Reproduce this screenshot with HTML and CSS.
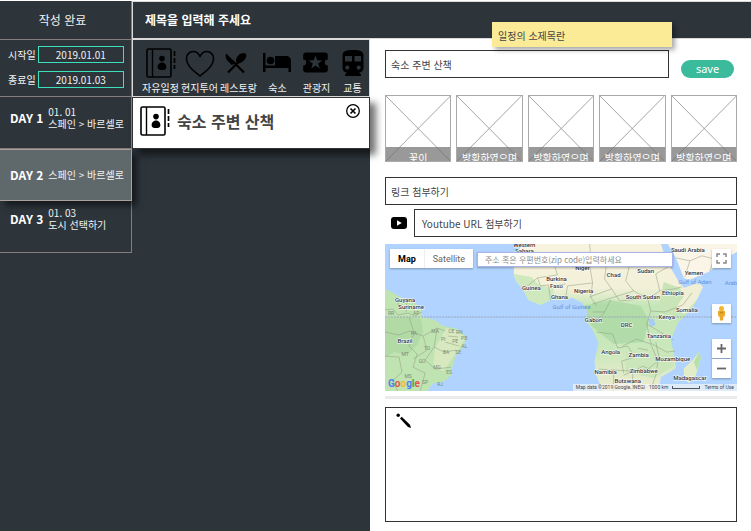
FILE: index.html
```html
<!DOCTYPE html>
<html lang="ko">
<head>
<meta charset="utf-8">
<meta name="viewport" content="width=device-width, initial-scale=1">
<title>여행 일정 작성</title>
<link rel="stylesheet" href="styles.css">
</head>
<body>
<svg class="defs" aria-hidden="true">
  <symbol id="book" viewBox="0 0 30 30">
    <rect x="1" y="1" width="24" height="28" rx="1.5" fill="none" stroke="#000" stroke-width="1.6"/>
    <path d="M6.5 1v28" stroke="#000" stroke-width="1.4"/>
    <circle cx="16" cy="10.6" r="2.8"/>
    <path d="M16 14.4c3 0 4.400 2.400 4.400 4.800 0 2-1.800 2.900-4.400 2.900s-4.400-.9-4.400-2.900c0-2.400 1.400-4.800 4.400-4.800z"/>
    <path d="M28.500 3v5M28.500 10v5M28.500 17v4" stroke="#000" stroke-width="1.700"/>
  </symbol>
  <symbol id="cross" viewBox="0 0 66 66" preserveAspectRatio="none">
    <path d="M0 0L66 66M66 0L0 66" stroke="#8c8c8c" stroke-width="0.8"/>
  </symbol>
</svg>
<div class="app">
  <aside class="sidebar">
    <button class="done" type="button">작성 완료</button>
    <div class="dates">
      <label class="date">시작일 <input type="text" value="2019.01.01"></label>
      <label class="date">종료일 <input type="text" value="2019.01.03"></label>
    </div>
    <nav class="days">
      <button class="day" type="button"><b>DAY 1</b><span>01. 01<br>스페인 &gt; 바르셀로</span></button>
      <button class="day active" type="button"><b>DAY 2</b><span>스페인 &gt; 바르셀로</span></button>
      <button class="day" type="button"><b>DAY 3</b><span>01. 03<br>도시 선택하기</span></button>
    </nav>
  </aside>

  <header class="header"><h1>제목을 입력해 주세요</h1></header>

  <section class="plan">
    <div class="tools">
      <button class="tool" type="button"><svg width="30" height="30"><use href="#book"/></svg>자유일정</button>
      <button class="tool" type="button"><svg width="30" height="30" viewBox="0 0 30 30"><path d="M15 28C11 25 2 19 1.500 11.500 1.200 6.500 4.500 3.500 8 3.500c3.200 0 5.600 2 7 4.800 1.400-2.800 3.800-4.800 7-4.800 3.500 0 6.800 3 6.500 8C28 19 19 25 15 28z" fill="none" stroke="#000" stroke-width="1.600"/></svg>현지투어</button>
      <button class="tool" type="button"><svg width="30" height="30" viewBox="0 0 30 30"><path d="M4 24.500L15 13.500M20 24.500L8 12.500" stroke="#000" stroke-width="2.200"/><path d="M2.200 5.500L11 14.300l-3 3-4-4C1.700 11 1 8 2.200 5.500z"/><path d="M13.500 15.500c-2.500-2-1.500-5.500.5-7.800 2.200-2.500 6-3.600 7.600-2.100s.6 5-1.900 7.200c-2.100 2-4.600 3-6.200 2.700z"/></svg>레스토랑</button>
      <button class="tool" type="button"><svg width="30" height="30" viewBox="0 0 30 30"><path d="M0 5h2.500v12.500H12V8h11c3 0 5 2 5 5v11h-2.500v-4h-23v4H0z"/><circle cx="7.500" cy="12.500" r="3.800"/></svg>숙소</button>
      <button class="tool" type="button"><svg width="30" height="30" viewBox="0 0 30 30"><path fill-rule="evenodd" d="M5 4.500h18c1.700 0 2.800 1 2.800 2.500v4.500a3 3 0 0 0 0 6V22c0 1.500-1.100 2.500-2.800 2.500H4c-1.700 0-2.800-1-2.800-2.500v-4.500a3 3 0 0 0 0-6V7c0-1.500 1.100-2.500 2.800-2.500zM13.500 7.500l-1.700 4.800-5.100.1 4.100 3.100-1.500 4.900 4.200-2.900 4.200 2.900-1.500-4.900 4.100-3.100-5.100-.1z"/></svg>관광지</button>
      <button class="tool" type="button"><svg width="30" height="30" viewBox="0 0 30 30"><path fill-rule="evenodd" d="M15 2c6.500 0 10.500 1 10.500 5.500V20c0 2.600-2 4.500-4.500 4.500l2 2V28H7v-1.500l2-2c-2.500 0-4.500-1.900-4.500-4.500V7.500C4.500 3 8.500 2 15 2zM7 8v5.500h7V8zM16.500 8v5.500H23V8zM9.300 17.500a2.100 2.100 0 1 0 0 4.200 2.100 2.100 0 0 0 0-4.200zM20.700 17.500a2.100 2.100 0 1 0 0 4.200 2.100 2.100 0 0 0 0-4.200z"/></svg>교통</button>
    </div>
    <article class="card">
      <svg width="30" height="30" aria-hidden="true"><use href="#book"/></svg>
      <h2>숙소 주변 산책</h2>
      <button class="close" type="button" aria-label="닫기"><svg width="16" height="16" viewBox="0 0 16 16"><circle cx="8" cy="8" r="6.300" fill="none" stroke="#000" stroke-width="1.300"/><path d="M5.500 5.500l5 5M10.500 5.500l-5 5" stroke="#000" stroke-width="1.600"/></svg></button>
    </article>
  </section>

  <main class="editor">
    <div class="hint">일정의 소제목란</div>
    <div class="title-row">
      <input class="field" type="text" aria-label="일정의 소제목란" value="숙소 주변 산책">
      <button class="save" type="button">save</button>
    </div>
    <div class="photos">
      <figure><svg><use href="#cross"/></svg><figcaption>꽃이</figcaption></figure>
      <figure><svg><use href="#cross"/></svg><figcaption>방황하였으며</figcaption></figure>
      <figure><svg><use href="#cross"/></svg><figcaption>방황하였으며</figcaption></figure>
      <figure><svg><use href="#cross"/></svg><figcaption>방황하였으며</figcaption></figure>
      <figure><svg><use href="#cross"/></svg><figcaption>방황하였으며</figcaption></figure>
    </div>
    <input class="field" type="text" aria-label="링크" placeholder="링크 첨부하기">
    <div class="video-row">
      <svg width="16" height="12" viewBox="0 0 16 12" aria-hidden="true"><rect width="16" height="12" rx="3"/><path d="M6 3.300v5.400L10.800 6z" fill="#fff"/></svg>
      <input class="field" type="text" aria-label="Youtube URL" placeholder="Youtube URL 첨부하기">
    </div>
    <div class="map">
      <svg class="world" viewBox="0 0 351 147" preserveAspectRatio="xMidYMid slice">
        <defs>
          <linearGradient id="africa" x1="0" y1="0" x2="0" y2="1">
            <stop offset="0" stop-color="#f7f3df"/><stop offset=".3" stop-color="#f3f0d8"/><stop offset=".42" stop-color="#c5e6b8"/><stop offset=".72" stop-color="#c9e8bb"/><stop offset="1" stop-color="#efecd0"/>
          </linearGradient>
          <clipPath id="africa-shape"><path d="M138 0L132 8 130 14 128 29 130 36 138 46 143 56 155 61 165 56 175 56 187 54 197 59 202 68 200 76 207 86 213 99 209 116 210 129 217 147H273L275 133 290 124 288 109 285 96 292 79 307 64 317 43 313 39 298 44 292 36 283 21 277 6 275 0z"/></clipPath>
        </defs>
        <rect width="351" height="147" fill="#b0d3ff"/>
        <path d="M0 45L7 48 15 53 28 58 36 64 37 73 50 76 58 82 73 85 81 93 78 103 71 111 67 123 66 131 58 138 48 139 42 147H0z" fill="#c0e4b1"/>
        <path d="M0 74L20 73 36 75 38 88 32 101 22 111 9 108 0 114z" fill="#b2daa5"/>
        <path d="M61 84L74 87 80 94 74 104 66 116 58 127 48 122 50 104z" fill="#d8e9bf"/>
        <g clip-path="url(#africa-shape)">
          <rect x="128" width="190" height="147" fill="url(#africa)"/>
          <path d="M128 30l18 3 8 8 14 3v18h-40z" fill="#cfe8bd"/>
          <path d="M197 62l28-6 30 6 8 14-5 22-30 2-22-18z" fill="#a9d8a3" opacity=".75"/>
          <path d="M278 38l16 6 6 12-14 18-14-8z" fill="#c9e4b6"/>
          <path d="M294 40l24-2-2 12-18 20-8-6 8-12z" fill="#f0efd6"/>
          <path d="M262 75l6 0 2 6-5 2z" fill="#a8cdf5"/>
          <path d="M240 108l30-6 18 8v12l-20 12-28-6z" fill="#cbe6ba"/>
        </g>
        <path d="M282 0L290 14 298 34 303 36 323 28 337 16 351 8V0z" fill="#faf5e6"/>
        <path d="M313 108L315 114 310 131 303 139 298 134 298 124 307 116z" fill="#e3ecc8"/>
        <path d="M313 108L315 114 311 126 308 118z" fill="#b7dfa9"/>
        <g class="borders">
          <path d="M0 66l8-1 5 6 10-2 7 3 7-4M12 53l2 13M22 56l-1 12M0 88l14 3 10-4 14 5 14-8 8 3M24 73l5 16-5 13 8 8-4 13 12 6-5 18M38 92l4 14-14 9M52 84l-3 19 10 5 12-2M49 103l-9 13 10 9 16-2M0 112l14 1 3 15-10 9 6 10M63 92l10 1M60 98l14 4"/>
          <path d="M130 14h13l10 6 15-1 4 12-20 3-11 9M152 34l3 8 8-1 2 15M143 47l9-4M168 18l20-6 16 9 3 18-25 3-2 13M180 40l-10 2M204 0l2 20 18-10 20 11 20-2 18 3M222 10l-3 25 7 10-22 8M207 39l-2 14 6 9M244 21l-4 16 8 10-22 7-19 6M248 47l14 8 12-8-4-17 14-8M262 55l3 12 14 1 18-7 9-12M274 47l14-2 8-2M226 45l8 12 22-2M207 68l12 0 6-12M202 77l8 1 9-10M211 88l16 2 5 14 10-2 7 11-13 4 2 12M265 67l-4 13 4 19 16 9 8-1M261 80l27 16M237 102l14-7 14 5 7 17-10 8-14 2-10 4M213 125l34 2v20M247 128l10-6 14 6-4 12-12 7M228 125v22M252 104l10 2M270 98l3 14-2 12"/>
          <path d="M290 14l14 3 12-5 12 3M304 17l-5 16M328 15l-4 12"/>
        </g>
        <path d="M0 73H351" stroke="#9aa6bd" stroke-width="1" stroke-dasharray="2 1"/>
        <g class="labels">
          <text x="20" y="58">Guyana</text><text x="26" y="65">Suriname</text><text x="20" y="99">Brazil</text>
          <text x="139" y="3">Western</text><text x="139" y="9">Sahara</text><text x="146" y="46">Guinea</text><text x="171" y="37">Burkina</text><text x="171" y="44">Faso</text><text x="174" y="55">Ghana</text>
          <text x="197" y="26">Niger</text><text x="228" y="33">Chad</text><text x="260" y="29">Sudan</text><text x="198" y="49">Nigeria</text><text x="257" y="55">South Sudan</text><text x="287" y="51">Ethiopia</text><text x="301" y="68">Somalia</text><text x="281" y="75">Kenya</text><text x="208" y="78">Gabon</text><text x="241" y="83">DRC</text><text x="273" y="94">Tanzania</text><text x="225" y="110">Angola</text><text x="253" y="113">Zambia</text><text x="287" y="117">Mozambique</text><text x="220" y="130">Namibia</text><text x="258" y="129">Zimbabwe</text><text x="242" y="139">Botswana</text><text x="304" y="136">Madagascar</text><text x="302" y="8">Saudi Arabia</text><text x="308" y="31">Yemen</text>
        </g>
        <g class="labels minor">
          <text x="29" y="91">PA</text><text x="50" y="89">MA</text><text x="66" y="89">CE</text><text x="74" y="90">RN</text><text x="58" y="97">PI</text><text x="70" y="99">PE</text><text x="79" y="96">PB</text><text x="79" y="104">AL</text><text x="73" y="110">SE</text><text x="42" y="106">TO</text><text x="61" y="110">BA</text><text x="20" y="112">MT</text><text x="37" y="119">GO</text><text x="52" y="125">MG</text><text x="64" y="130">ES</text><text x="23" y="134">MS</text><text x="40" y="140">SP</text><text x="55" y="142">RJ</text><text x="6" y="71">RR</text><text x="31" y="71">AP</text>
        </g>
        <g class="labels sea"><text x="309" y="40">Gulf of Aden</text><text x="186" y="65">Gulf of Guinea</text><text x="345" y="41">Arab</text></g>
      </svg>
      <div class="map-type"><button class="on" type="button">Map</button><button type="button">Satellite</button></div>
      <input class="address" type="text" aria-label="주소" placeholder="주소 혹은 우편번호(zip code)입력하세요">
      <div class="map-tools">
        <button class="tile" type="button" aria-label="전체 화면"><svg width="19" height="19" viewBox="0 0 19 19"><path d="M5 8V5h3M11 5h3v3M14 11v3h-3M8 14H5v-3" fill="none" stroke="#888" stroke-width="1.500"/></svg></button>
        <button class="tile pegman" type="button" aria-label="스트리트 뷰"><svg width="19" height="19" viewBox="0 0 19 19"><path d="M5.800 8c0-1 1.600-1.800 3.700-1.800s3.700.8 3.700 1.800l-.5 4.500h-1.300l-.4 4H8l-.4-4H6.300z" fill="#eba92b"/><circle cx="9.500" cy="4.600" r="2.500" fill="#f3b52f"/><path d="M8 8l1.500 1L11 8" stroke="#b77a13" fill="none"/></svg></button>
        <div class="zoom">
          <button class="tile" type="button" aria-label="확대"><svg width="19" height="19" viewBox="0 0 19 19"><path d="M9.500 5v9M5 9.500h9" stroke="#666" stroke-width="1.800"/></svg></button>
          <button class="tile" type="button" aria-label="축소"><svg width="19" height="19" viewBox="0 0 19 19"><path d="M5 9.500h9" stroke="#666" stroke-width="1.800"/></svg></button>
        </div>
      </div>
      <div class="logo"><span class="b">G</span><span class="r">o</span><span class="y">o</span><span class="b">g</span><span class="g">l</span><span class="r">e</span></div>
      <div class="credit"><span>Map data ©2019 Google, INEGI</span><span>1000 km</span><i></i><a href="#">Terms of Use</a></div>
    </div>
    <div class="divider"></div>
    <div class="memo">
      <textarea aria-label="메모"></textarea>
      <svg width="16" height="16" viewBox="0 0 16 16" aria-hidden="true"><circle cx="2.200" cy="2.200" r="1.700"/><path d="M4 5.500L5.700 3.800 14 11.800l1 3.200-3-1z"/></svg>
    </div>
  </main>
</div>
</body>
</html>
```

FILE: styles.css
```css
* { box-sizing: border-box; }

body {
  margin: 0;
  background: #fff;
  color: #444;
  font: 10px/12px "Noto Sans CJK KR", sans-serif;
}

button, input, textarea {
  margin: 0;
  padding: 0;
  border: 0;
  border-radius: 0;
  background: none;
  color: inherit;
  font: inherit;
}

h1, h2, figure { margin: 0; }
svg { display: block; flex: none; }
.defs { position: absolute; width: 0; height: 0; }

.app {
  display: grid;
  grid-template-columns: 132px 238px 1fr;
  grid-template-rows: 38px 1fr;
  min-height: 100vh;
  padding-top: 1px;
}

.sidebar {
  grid-row: 1 / 3;
  background: #2d353b;
  color: #f2f2f2;
}

.done {
  display: block;
  width: 100%;
  height: 39px;
  padding-right: 6px;
  border: solid #857d7b;
  border-width: 0 1px 1px 0;
  font-size: 12px;
  line-height: 16px;
}

.dates {
  display: flex;
  flex-direction: column;
  gap: 8px;
  height: 57px;
  padding: 6px 7px 8px 8px;
  border: solid #857d7b;
  border-width: 0 1px 1px 0;
}

.date {
  display: flex;
  align-items: center;
  gap: 2px;
  white-space: nowrap;
}

.date input {
  flex: 1;
  min-width: 0;
  height: 17px;
  border: 1px solid #3ce0bd;
  text-align: center;
}

.day {
  display: flex;
  align-items: center;
  gap: 5px;
  width: 100%;
  height: 52px;
  padding: 0 0 10px 10px;
  border: solid #857d7b;
  border-width: 0 1px 1px 0;
  text-align: left;
  white-space: nowrap;
}

.day b { font-size: 12px; line-height: 16px; color: #fff; }
.day:last-child { padding-bottom: 16px; }

.day.active {
  position: relative;
  z-index: 1;
  padding-bottom: 0;
  border-color: #aaa19f;
  border-top-width: 1px;
  background: #5f686b;
  box-shadow: 5px 5px 6px rgba(0, 0, 0, .5);
}

.header {
  grid-column: 2 / 4;
  display: flex;
  align-items: center;
  padding-left: 12px;
  border: 1px solid #ddd9d9;
  border-right: 0;
  background: #2d353b;
  color: #fff;
}

.header h1 { font-size: 12px; line-height: 16px; }

.plan { background: #2d353b; }

.tools {
  display: grid;
  grid-template-columns: repeat(5, 39px) 1fr;
  height: 58px;
  padding: 8px 0 0 8px;
  border: 1px solid #ddd9d9;
  color: #f2f2f2;
}

.tool {
  display: flex;
  flex-direction: column;
  align-items: center;
  gap: 4px;
  height: 46px;
  white-space: nowrap;
}

.card {
  position: relative;
  z-index: 2;
  display: flex;
  align-items: center;
  gap: 7px;
  height: 52px;
  padding: 0 8px 4px 7px;
  border: 1px solid #333;
  background: #fff;
  box-shadow: 6px 6px 7px rgba(0, 0, 0, .55);
}

.card h2 { flex: 1; font-size: 16px; line-height: 24px; }
.close { align-self: flex-start; padding-top: 5px; }

.editor {
  position: relative;
  display: flex;
  flex-direction: column;
  padding: 11px 14px 9px 15px;
}

.hint {
  position: absolute;
  z-index: 3;
  top: -17px;
  right: 79px;
  width: 180px;
  padding: 8px 6px 5px;
  background: #fbea96;
  box-shadow: 3px 3px 5px rgba(0, 0, 0, .35);
}

.title-row { display: flex; align-items: flex-end; gap: 12px; }

.field {
  flex: none;
  width: 100%;
  height: 28px;
  padding: 0 5px;
  border: 1px solid #333;
}

.title-row .field, .video-row .field { flex: 1; width: auto; min-width: 0; }

::placeholder { color: inherit; opacity: 1; }

.save {
  width: 53px;
  height: 18px;
  margin-right: 3px;
  border-radius: 9px;
  background: #3bbb9b;
  color: #fff;
  font: 11px/16px "Noto Sans", sans-serif;
}

.photos {
  display: grid;
  grid-template-columns: repeat(5, 1fr);
  gap: 5px;
  margin: 17px 0 15px;
}

.photos figure {
  position: relative;
  height: 67px;
  overflow: hidden;
  border: 1px solid #aaa;
}

.photos svg { width: 100%; height: 100%; }

.photos figcaption {
  position: absolute;
  inset: 51px 0 0;
  padding-top: 5px;
  background: rgba(110, 110, 110, .7);
  color: #fff;
  text-align: center;
  white-space: nowrap;
}

.video-row {
  display: flex;
  align-items: center;
  gap: 7px;
  margin: 4px 0 7px;
  padding-left: 6px;
}

.video-row .field { padding-left: 7px; }

.map {
  position: relative;
  height: 147px;
  overflow: hidden;
  font-family: Roboto, sans-serif;
}

.world { width: 100%; height: 100%; }
.borders { fill: none; stroke: #8d9a80; stroke-width: .5; }

.labels {
  fill: #333;
  stroke: #fff;
  stroke-width: 1px;
  paint-order: stroke;
  font-size: 6px;
  font-weight: 500;
  text-anchor: middle;
}

.labels.minor { fill: #7c8a7a; font-size: 5px; font-weight: 400; stroke-width: 0; }
.labels.sea { fill: #5f93dc; font-weight: 400; stroke-width: 0; }

.map-type, .address, .tile { background: #fff; box-shadow: 0 1px 2px rgba(0, 0, 0, .3); }

.map-type {
  position: absolute;
  top: 5px;
  left: 5px;
  display: flex;
  height: 19px;
  color: #666;
  font-size: 9px;
}

.map-type button { padding: 0 8px; }
.map-type .on { border-right: 1px solid #eee; color: #000; font-weight: 700; }

.address {
  position: absolute;
  top: 8px;
  left: 92px;
  width: 196px;
  height: 15px;
  padding: 0 7px;
  border: 1px solid #a9b5e8;
  color: #8d8d8d;
  font-family: "Noto Sans CJK KR", sans-serif;
  font-size: 8px;
}

.map-tools {
  position: absolute;
  top: 5px;
  right: 6px;
  bottom: 12px;
  display: flex;
  flex-direction: column;
}

.tile { display: block; width: 19px; height: 19px; }
.pegman { margin: 36px 0 16px; }
.zoom .tile + .tile { margin-top: 1px; }

.logo {
  position: absolute;
  left: 3px;
  bottom: 1px;
  font: 700 10px/12px Roboto, sans-serif;
}

.logo .b { color: #4f7ff0; }
.logo .r { color: #e5544b; }
.logo .y { color: #f2b92f; }
.logo .g { color: #3aa757; }

.credit {
  position: absolute;
  right: 0;
  bottom: 0;
  display: flex;
  align-items: center;
  gap: 4px;
  padding: 0 3px;
  background: rgba(245, 245, 245, .7);
  color: #444;
  font-size: 5px;
  line-height: 7px;
}

.credit i { width: 28px; height: 3px; border: 1px solid #555; border-top: 0; }
.credit a { color: inherit; text-decoration: none; }

.divider { height: 3px; margin: 5px 0 8px; background: #ebebeb; }

.memo { position: relative; display: flex; flex: 1; min-height: 115px; }

.memo textarea {
  flex: 1;
  min-width: 0;
  padding: 8px 30px;
  border: 1px solid #333;
  resize: none;
}

.memo svg { position: absolute; top: 6px; left: 11px; }
```
